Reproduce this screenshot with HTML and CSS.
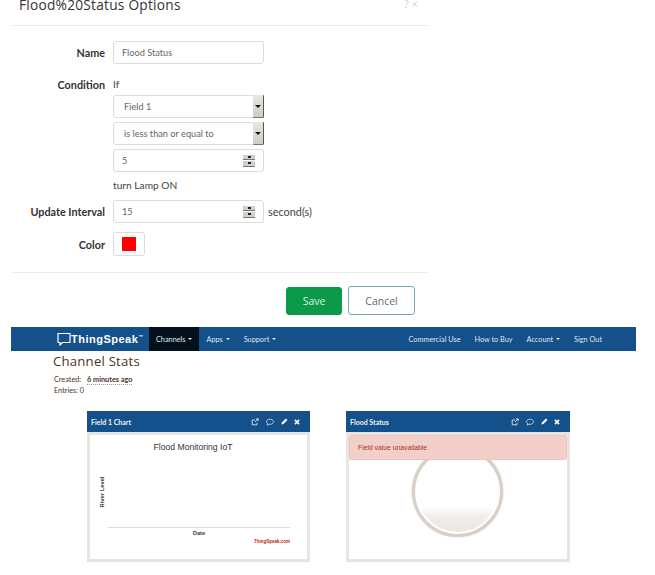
FILE: index.html
```html
<!DOCTYPE html>
<html lang="en">
<head>
<meta charset="utf-8">
<title>Flood Status</title>
<link rel="stylesheet" href="styles.css">
</head>
<body>
<section class="dialog">
  <header class="dialog-head">
    <h1 class="dialog-title">Flood%20Status Options</h1>
    <span class="dialog-tools">? ×</span>
  </header>
  <form class="form">
    <div class="row row-name">
      <span class="label">Name</span>
      <div class="field field-wide">Flood Status</div>
    </div>
    <div class="row row-cond">
      <span class="label label-top">Condition</span>
      <div class="stack">
        <span class="plain plain-if">If</span>
        <div class="field field-wide field-select"><span class="select-text">Field 1</span><span class="select-btn"><i class="caret"></i></span></div>
        <div class="field field-wide field-select"><span class="select-text">is less than or equal to</span><span class="select-btn"><i class="caret"></i></span></div>
        <div class="field field-wide field-num"><span>5</span><span class="spin"><i class="spin-up"></i><i class="spin-down"></i></span></div>
        <span class="plain plain-turn">turn Lamp ON</span>
      </div>
    </div>
    <div class="row row-update">
      <span class="label">Update Interval</span>
      <div class="field field-wide field-num"><span>15</span><span class="spin"><i class="spin-up"></i><i class="spin-down"></i></span></div>
      <span class="plain plain-unit">second(s)</span>
    </div>
    <div class="row row-color">
      <span class="label">Color</span>
      <div class="field field-color"><i class="swatch"></i></div>
    </div>
  </form>
  <footer class="dialog-foot">
    <button class="btn btn-save" type="button">Save</button>
    <button class="btn btn-cancel" type="button">Cancel</button>
  </footer>
</section>

<nav class="nav">
  <div class="brand">
    <svg class="brand-icon" width="14" height="14" viewBox="0 0 14 14"><path d="M1 1.500h12v9H5.500L3 13v-2.500H1z" fill="none" stroke="#fff" stroke-width="1.200"/></svg>
    <span class="brand-name">ThingSpeak</span><span class="brand-tm">™</span>
  </div>
  <ul class="menu">
    <li class="menu-item menu-active">Channels<i class="menu-caret"></i></li>
    <li class="menu-item">Apps<i class="menu-caret"></i></li>
    <li class="menu-item">Support<i class="menu-caret"></i></li>
  </ul>
  <ul class="menu menu-right">
    <li class="menu-item">Commercial Use</li>
    <li class="menu-item">How to Buy</li>
    <li class="menu-item">Account<i class="menu-caret"></i></li>
    <li class="menu-item">Sign Out</li>
  </ul>
</nav>

<section class="stats">
  <h2 class="stats-title">Channel Stats</h2>
  <p class="stats-line">Created: <span class="stats-ago">6 minutes ago</span></p>
  <p class="stats-line">Entries: 0</p>
</section>

<section class="cards">
  <article class="card">
    <header class="card-head">
      <span class="card-title">Field 1 Chart</span>
      <span class="card-icons">
        <svg width="8" height="8" viewBox="0 0 10 10"><path d="M7.500 6v2.500h-6v-6H5M5 5l4-4M6 1h3v3" fill="none" stroke="#dfe8f0" stroke-width="1.100"/></svg>
        <svg width="8" height="8" viewBox="0 0 10 10"><path d="M5 1.500c2.500 0 4.300 1.400 4.300 3.200S7.500 7.900 5 7.900c-.5 0-1 0-1.400-.2L1.500 9l.4-2.100C1.100 6.300.7 5.500.7 4.700.7 2.900 2.500 1.500 5 1.500z" fill="none" stroke="#dfe8f0" stroke-width="1"/></svg>
        <svg width="7" height="7" viewBox="0 0 10 10"><path d="M7 .8 9.200 3 3.500 8.700.6 9.400l.7-2.900z" fill="#fff"/></svg>
        <svg class="icon-close" width="6" height="6" viewBox="0 0 10 10"><path d="M1.500 1.500l7 7M8.500 1.500l-7 7" stroke="#fff" stroke-width="2.600"/></svg>
      </span>
    </header>
    <div class="card-body">
      <svg class="chart" width="217" height="124" viewBox="0 0 217 124">
        <text class="chart-title" x="103" y="15" text-anchor="middle">Flood Monitoring IoT</text>
        <text class="chart-axis" transform="translate(14 57) rotate(-90)" text-anchor="middle">River Level</text>
        <line x1="18" x2="200" y1="92.500" y2="92.500" stroke="#dcdce2"/>
        <text class="chart-axis" x="109" y="100" text-anchor="middle">Date</text>
        <text class="chart-credit" x="200" y="108" text-anchor="end">ThingSpeak.com</text>
      </svg>
    </div>
  </article>
  <article class="card card-status">
    <header class="card-head">
      <span class="card-title">Flood Status</span>
      <span class="card-icons">
        <svg width="8" height="8" viewBox="0 0 10 10"><path d="M7.500 6v2.500h-6v-6H5M5 5l4-4M6 1h3v3" fill="none" stroke="#dfe8f0" stroke-width="1.100"/></svg>
        <svg width="8" height="8" viewBox="0 0 10 10"><path d="M5 1.500c2.500 0 4.300 1.400 4.300 3.200S7.500 7.900 5 7.900c-.5 0-1 0-1.400-.2L1.500 9l.4-2.100C1.100 6.300.7 5.500.7 4.700.7 2.900 2.500 1.500 5 1.500z" fill="none" stroke="#dfe8f0" stroke-width="1"/></svg>
        <svg width="7" height="7" viewBox="0 0 10 10"><path d="M7 .8 9.200 3 3.500 8.700.6 9.400l.7-2.900z" fill="#fff"/></svg>
        <svg class="icon-close" width="6" height="6" viewBox="0 0 10 10"><path d="M1.500 1.500l7 7M8.500 1.500l-7 7" stroke="#fff" stroke-width="2.600"/></svg>
      </span>
    </header>
    <div class="card-body status-body">
      <div class="lamp"></div>
      <div class="alert">Field value unavailable</div>
    </div>
  </article>
</section>
</body>
</html>
```

FILE: styles.css
```css
* { box-sizing: border-box; }
html, body { margin: 0; padding: 0; }
body {
  width: 655px;
  height: 575px;
  overflow: hidden;
  background: #fff;
  font-family: "Lato", "Liberation Sans", sans-serif;
  color: #444;
}

.dialog { width: 417px; margin-left: 11px; }
.dialog-head {
  height: 26px;
  border-bottom: 1px solid #ececec;
  display: flex;
  justify-content: space-between;
  padding: 0 10px 0 8px;
}
.dialog-title {
  margin: 0;
  font: 500 13.700px/9px "Open Sans", sans-serif;
  letter-spacing: .25px;
  color: #333;
}
.dialog-tools { font-size: 11px; line-height: 8px; color: #d4d4d4; }

.form { padding-top: 15px; }
.row { display: flex; align-items: center; }
.label {
  width: 94px;
  margin-right: 8px;
  text-align: right;
  font-size: 10.800px;
  font-weight: 700;
  color: #333;
}
.label-top { line-height: 13px; margin-top: 7px; align-self: flex-start; }
.field {
  height: 23px;
  background: #fff;
  border: 1px solid #dcdcdc;
  border-radius: 3px;
  font-size: 9.200px;
  color: #666;
  display: flex;
  align-items: center;
  padding-left: 8px;
}
.field-wide { width: 151px; }
.row-cond { margin-top: 7px; align-items: flex-start; }
.stack { display: flex; flex-direction: column; }
.plain { font-size: 10px; color: #444; line-height: 13px; }
.plain-if { margin-top: 7px; margin-bottom: 4px; }
.field-select { padding-left: 10px; padding-right: 0; justify-content: space-between; margin-bottom: 4px; }
.select-btn {
  width: 11px;
  height: 23px;
  margin: 0 -1px 0 0;
  background: linear-gradient(#e8e6df, #cfcdc5);
  border-right: 1.500px solid #555;
  border-bottom: 1.500px solid #777;
  display: flex;
  align-items: center;
  justify-content: center;
  border-radius: 1px;
}
.caret { width: 0; height: 0; border: 3px solid transparent; border-top-color: #111; border-bottom: 0; }
.field-num { justify-content: space-between; padding-right: 8px; }
.spin {
  width: 12px;
  height: 12px;
  display: flex;
  flex-direction: column;
  gap: 1px;
}
.spin i {
  flex: 1;
  background: #d2d0c8;
  border-bottom: 1px solid #777;
  display: flex;
  align-items: center;
  justify-content: center;
}
.spin i::after { content: ""; width: 3px; height: 2px; background: #222; }
.plain-turn { margin-top: 7px; line-height: 13px; font-size: 10.200px; }
.row-update { margin-top: 8px; }
.plain-unit { margin-left: 4px; font-size: 10.900px; }
.row-color { margin-top: 9px; }
.field-color { width: 32px; height: 24px; padding: 0; justify-content: center; }
.swatch { width: 14px; height: 14px; background: #f00; }

.dialog-foot {
  margin-top: 16px;
  border-top: 1px solid #ececec;
  padding: 13px 13px 0 0;
  display: flex;
  justify-content: flex-end;
  align-items: flex-start;
  gap: 6px;
}
.btn {
  border-radius: 3px;
  font: 400 10.500px "Open Sans", sans-serif;
  padding: 0;
}
.btn-save { width: 56px; height: 28px; margin-top: 1px; background: #0a9a4a; border: 1px solid #0a9a4a; color: #d8efe0; }
.btn-cancel { width: 67px; height: 29px; background: #fff; border: 1px solid #7fa6b8; color: #5f6b72; }

.nav {
  height: 24px;
  margin: 12px 19px 0 11px;
  background: #14508a;
  display: flex;
  align-items: stretch;
  padding-left: 46px;
}
.brand { display: flex; align-items: center; width: 92px; color: #fff; }
.brand-icon { margin-right: 0; flex: none; }
.brand-name { font: 700 11px "Liberation Sans", sans-serif; letter-spacing: .5px; }
.brand-tm { font-size: 6px; margin-top: -5px; }
.menu { display: flex; list-style: none; margin: 0; padding: 0; }
.menu-right { margin-left: auto; padding-right: 27px; }
.menu-item {
  display: flex;
  align-items: center;
  padding: 0 7px;
  font-size: 7.300px;
  color: #dfe8ee;
  white-space: nowrap;
}
.menu-active { background: #04111c; }
.menu-caret {
  width: 0;
  height: 0;
  margin-left: 3px;
  border: 2px solid transparent;
  border-top-color: currentColor;
  border-bottom: 0;
}

.stats { padding: 2px 0 0 53px; height: 60px; }
.stats-title {
  margin: 0 0 5px;
  font: 400 13.200px/17px "Open Sans", sans-serif;
  letter-spacing: .2px;
  color: #4b3426;
}
.stats-line { margin: 0; font-size: 7.300px; line-height: 10.500px; color: #4b3426; padding-left: 1px; }
.stats-ago { margin-left: 4px; font-weight: 700; border-bottom: 1px dotted #a98; }

.cards { display: flex; gap: 36px; padding-left: 87px; }
.card { width: 223px; height: 151px; }
.card-status { width: 224px; }
.card-head {
  height: 21px;
  background: #14508a;
  display: flex;
  align-items: center;
  justify-content: space-between;
  padding: 0 10px 0 4px;
  color: #eef3f7;
}
.card-title { font-size: 7px; font-weight: 700; }
.card-icons { display: flex; align-items: center; gap: 7px; }
.icon-close { margin-left: -1px; }
.card-body {
  height: 130px;
  border: 3px solid #e8e4de;
  background: #fff;
  position: relative;
  overflow: hidden;
}
.chart { display: block; }
.chart-title { font: 8.600px "Liberation Sans", sans-serif; fill: #333; }
.chart-axis { font: 700 5.800px "Liberation Sans", sans-serif; fill: #444; }
.chart-credit { font: 700 4.500px "Liberation Sans", sans-serif; fill: #c4211a; }

.alert {
  position: relative;
  height: 25px;
  background: #f2d0c9;
  border: 1px solid #ecc6be;
  border-radius: 2px;
  padding-left: 8px;
  display: flex;
  align-items: center;
  font: 6.800px "Liberation Sans", sans-serif;
  color: #a93226;
}
.lamp {
  position: absolute;
  left: 63px;
  top: 11px;
  width: 91px;
  height: 91px;
  border-radius: 50%;
  border: 3px solid #d8d0c6;
  box-shadow: 0 0 2px #d8d0c6;
  background: #fff;
}
.lamp::after {
  content: "";
  position: absolute;
  inset: 2px;
  border-radius: 50%;
  background: linear-gradient(#fff 68%, #f2efeb 80%, #ebe7e2 96%);
}
```
